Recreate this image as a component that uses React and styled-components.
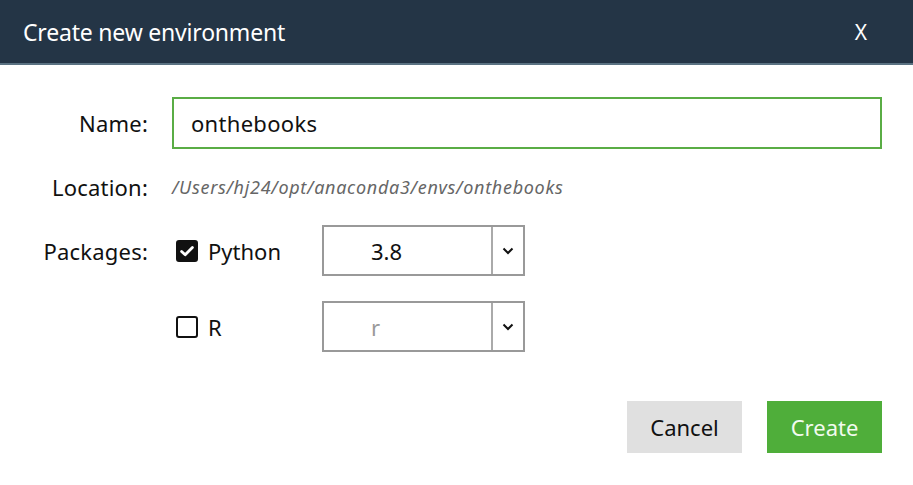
import React from 'react';
import styled, { createGlobalStyle } from 'styled-components';

const Global = createGlobalStyle`
  body {
    margin: 0;
    background: #fff;
    font-family: "Noto Sans", "Open Sans", sans-serif;
    color: #111;
  }
`;

const packages = [
  { name: 'Python', checked: true, version: '3.8' },
  { name: 'R', checked: false, version: 'r' },
];

const App = () => (
  <Dialog>
    <Global />
    <Header>
      <Title>Create new environment</Title>
      <Close>X</Close>
    </Header>
    <Body>
      <Form>
        <Label>Name:</Label>
        <NameInput value="onthebooks" readOnly />

        <Label>Location:</Label>
        <Path>/Users/hj24/opt/anaconda3/envs/onthebooks</Path>

        {packages.map((p, i) => (
          <React.Fragment key={p.name}>
            <Label>{i === 0 ? 'Packages:' : ''}</Label>
            <PackageRow>
              <Check>
                <Box checked={p.checked}>
                  {p.checked && (
                    <svg width="16" height="16" viewBox="0 0 16 16">
                      <path d="M2.6 8.4 L6.2 11.8 L13.4 4.4" fill="none" stroke="#fff" strokeWidth="2.8" strokeLinecap="round" strokeLinejoin="round" />
                    </svg>
                  )}
                </Box>
                {p.name}
              </Check>
              <Select>
                <SelectValue muted={!p.checked}>{p.version}</SelectValue>
                <Caret>
                  <svg width="12" height="8" viewBox="0 0 12 8">
                    <path d="M1.5 1.5 L6 6 L10.5 1.5" fill="none" stroke="#111" strokeWidth="2" />
                  </svg>
                </Caret>
              </Select>
            </PackageRow>
          </React.Fragment>
        ))}
      </Form>
      <Actions>
        <Button>Cancel</Button>
        <Button primary>Create</Button>
      </Actions>
    </Body>
  </Dialog>
);
export default App;

const Dialog = styled.div`
  width: 913px;
  height: 485px;
  background: #fff;
  overflow: hidden;
`;

const Header = styled.div`
  height: 63px;
  background: #243546;
  border-bottom: 2px solid #5a7282;
  display: flex;
  align-items: center;
  justify-content: space-between;
  padding: 0 46px 0 23px;
`;

const Title = styled.div`
  color: #fff;
  font-size: 23px;
  letter-spacing: -0.2px;
`;

const Close = styled.div`
  color: #fff;
  font-size: 21px;
`;

const Body = styled.div`
  padding: 32px 31px 0 0;
`;

const Form = styled.div`
  display: grid;
  grid-template-columns: 148px 1fr;
  grid-template-rows: 52px 26px 51px 51px;
  column-gap: 24px;
  row-gap: 25px;
  align-items: center;
`;

const Label = styled.div`
  text-align: right;
  font-size: 22px;
  letter-spacing: 0.2px;
  color: #111;
`;

const NameInput = styled.input`
  box-sizing: border-box;
  height: 52px;
  width: 100%;
  border: 2px solid #5aad45;
  padding: 0 17px;
  font-family: inherit;
  font-size: 22px;
  letter-spacing: 0.3px;
  color: #111;
  outline: none;
`;

const Path = styled.div`
  font-style: italic;
  font-size: 18px;
  color: #666;
  letter-spacing: 0.7px;
`;

const PackageRow = styled.div`
  display: flex;
  align-items: center;
  padding-left: 4px;
`;

const Check = styled.div`
  width: 146px;
  display: flex;
  align-items: center;
  gap: 10px;
  font-size: 22px;
  color: #111;
`;

const Box = styled.span`
  box-sizing: border-box;
  width: 22px;
  height: 22px;
  border-radius: 3px;
  border: 2px solid #111;
  background: ${(p) => (p.checked ? '#111' : '#fff')};
  display: flex;
  align-items: center;
  justify-content: center;
`;

const Select = styled.div`
  box-sizing: border-box;
  width: 203px;
  height: 51px;
  border: 2px solid #999;
  display: flex;
`;

const SelectValue = styled.div`
  flex: 1;
  border-right: 2px solid #aaa;
  display: flex;
  align-items: center;
  padding-left: 47px;
  font-size: 22px;
  color: ${(p) => (p.muted ? '#999' : '#111')};
`;

const Caret = styled.div`
  width: 30px;
  display: flex;
  align-items: center;
  justify-content: center;
`;

const Actions = styled.div`
  display: flex;
  justify-content: flex-end;
  gap: 25px;
  margin-top: 49px;
`;

const Button = styled.button`
  width: 115px;
  height: 52px;
  border: none;
  font-family: inherit;
  font-size: 22px;
  background: ${(p) => (p.primary ? '#4fae3a' : '#e0e0e0')};
  color: ${(p) => (p.primary ? '#f2fbef' : '#111')};
`;
